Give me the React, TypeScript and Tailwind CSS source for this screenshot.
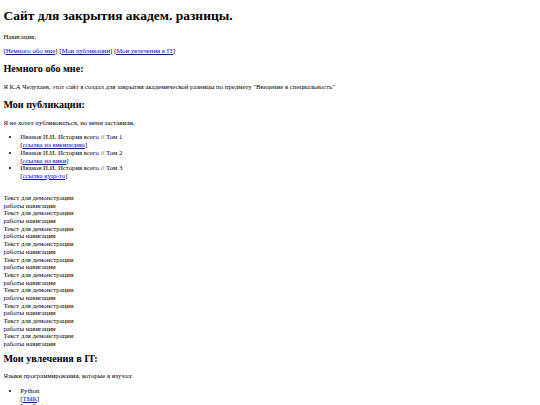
import React from "react";

const demo = Array.from({ length: 10 });

export default function App() {
  return (
    <div className="bg-white text-black min-h-[405px] px-[3.4px] py-[0.1px] text-[6.75px] leading-[1.14] [font-family:'Liberation_Serif','Times_New_Roman',serif]">
      <h1 className="text-[2em] font-bold mt-[0.6em] mb-[0.67em]">Сайт для закрытия академ. разницы.</h1>
      <p className="my-[1em]">Навигация:</p>
      <p className="my-[1em]">
        [<a href="#about" className="text-[#0000ee] underline">Немного обо мне</a>]{" "}
        [<a href="#pubs" className="text-[#0000ee] underline">Мои публикации</a>]{" "}
        [<a href="#it" className="text-[#0000ee] underline">Мои увлечения в IT</a>]
      </p>
      <h2 id="about" className="text-[1.5em] font-bold my-[0.83em]">Немного обо мне:</h2>
      <p className="my-[1em]">Я К.А Челухаев, этот сайт я создал для закрытия академической разницы по предмету "Введение в специальность"</p>
      <h2 id="pubs" className="text-[1.5em] font-bold my-[0.83em]">Мои публикации:</h2>
      <p className="my-[1em]">Я не хотел публиковаться, но меня заставили.</p>
      <ul className="list-disc pl-[2.5em] my-[1em]">
        <li>
          Иванов И.И. История всего // Том 1<br />[<a href="#" className="text-[#0000ee] underline">ссылка на википедию</a>]
        </li>
        <li>
          Иванов И.И. История всего // Том 2<br />[<a href="#" className="text-[#0000ee] underline">ссылка на вики</a>]
        </li>
        <li>
          Иванов И.И. История всего // Том 3<br />[<a href="#" className="text-[#0000ee] underline">ссылка куда-то</a>]
        </li>
      </ul>
      <br />
      {demo.map((_, i) => (
        <div key={i} className="w-[76px]">Текст для демонстрации работы навигации</div>
      ))}
      <h2 id="it" className="text-[1.5em] font-bold mt-[0.55em] mb-[0.75em]">Мои увлечения в IT:</h2>
      <p className="my-[0.9em]">Языки программирования, которые я изучал:</p>
      <ul className="list-disc pl-[2.5em] my-[1em]">
        <li>
          Python<br />[<a href="#" className="text-[#0000ee] underline">ТЫК</a>]
        </li>
        <li>
          JavaScript<br />[<a href="#" className="text-[#0000ee] underline">ТЫК</a>]
        </li>
      </ul>
    </div>
  );
}
